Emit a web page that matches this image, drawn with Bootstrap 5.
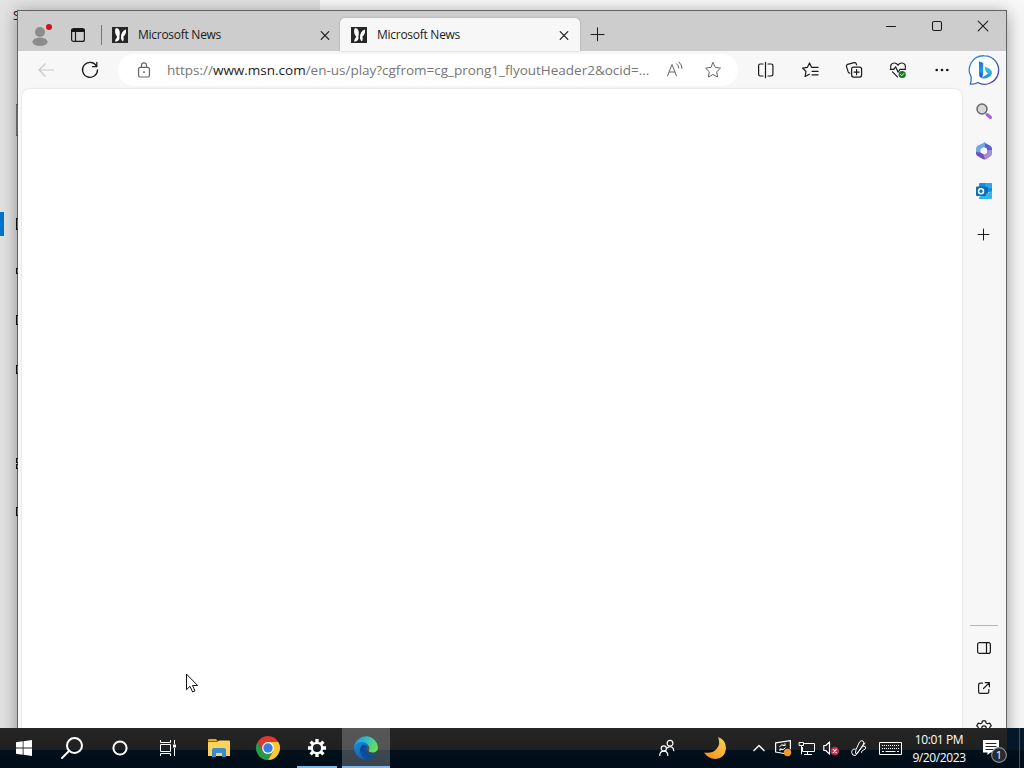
<!DOCTYPE html>
<html lang="en">
<head>
    <meta charset="UTF-8">
    <meta name="viewport" content="width=device-width, initial-scale=1.0">
    <title>Microsoft News</title>
    <!-- Bootstrap CSS -->
    <link href="https://cdn.jsdelivr.net/npm/bootstrap@5.3.0/dist/css/bootstrap.min.css" rel="stylesheet">
    <style>
        body {
            font-family: "Open Sans", "Noto Sans", sans-serif;
            font-size: 12px;
            color: #1b1b1b;
            /* Icon defaults, inherited by every svg */
            fill: none;
            stroke: currentColor;
            stroke-width: 1.2;
            stroke-linecap: round;
            stroke-linejoin: round;
        }
        svg {
            display: block;
            flex: none;
            overflow: visible;
        }
        button {
            color: inherit;
            background: none;
            border: 0;
            padding: 0;
            flex: none;
            display: flex;
            align-items: center;
            justify-content: center;
        }
        .desktop {
            width: 1024px;
            height: 768px;
            background: #f7f7f7;
        }
        /* Settings window behind the browser */
        .settings-pane {
            left: 0;
            top: 0;
            width: 320px;
            height: 728px;
            background: #e2e2e2;
        }
        .settings-letter {
            left: 13px;
            top: 8px;
            font-size: 12px;
            line-height: 16px;
        }
        .settings-active {
            left: 0;
            top: 212px;
            width: 4px;
            height: 24px;
            background: #0073cf;
        }
        .stem {
            left: 16px;
            width: 2px;
            border: 1px solid #111;
            border-right-width: 0;
        }
        /* Browser window */
        .browser {
            left: 17px;
            top: 10px;
            width: 990px;
            height: 741px;
            border: 1px solid #626262;
            background: #f7f7f7;
            box-shadow: 0 3px 16px rgba(0, 0, 0, 0.38);
        }
        .titlebar {
            height: 40px;
            background: #cdcdcd;
        }
        .profile-btn { width: 46px; height: 48px; }
        .actions-btn { width: 28px; height: 48px; }
        .tab-divider {
            width: 1px;
            height: 20px;
            margin: 14px 0 0 9px;
            background: #777;
        }
        .browser-tab {
            width: 240px;
            height: 33px;
            margin-top: 7px;
            padding: 0 8px 0 11px;
            border-radius: 5px 5px 0 0;
        }
        .browser-tab.inactive { width: 238px; padding-left: 10px; padding-right: 7px; }
        .browser-tab.current { background: #f7f7f7; box-shadow: 0 0 2px rgba(0, 0, 0, 0.25); }
        .tab-title {
            margin-left: 10px;
            font-size: 12px;
            line-height: 16px;
            letter-spacing: -0.27px;
        }
        .tab-close { width: 16px; height: 16px; }
        .newtab-btn { width: 34px; height: 46px; }
        .caption-btn { width: 46px; height: 30px; }
        .toolbar-row { height: 38px; padding-left: 6px; }
        .tool-btn { width: 44px; height: 38px; }
        .address {
            width: 620px;
            height: 32px;
            margin: 0 6px;
            padding: 0 9px 0 18px;
            border-radius: 16px;
            background: #fff;
            color: #666;
        }
        .url-text {
            width: 484px;
            margin-left: 15px;
            font-size: 13.5px;
            line-height: 20px;
            letter-spacing: -0.01px;
            color: #767676;
            white-space: nowrap;
        }
        .url-text b { font-weight: 400; color: #1b1b1b; }
        .address-btn { width: 32px; height: 32px; }
        .page-area {
            width: 940px;
            margin-left: 4px;
            background: #fff;
            border-radius: 7px 7px 0 0;
            box-shadow: 0 0 2px rgba(0, 0, 0, 0.18);
        }
        .side-strip { width: 44px; padding: 2px 0; }
        .side-btn { width: 44px; height: 40px; }
        .side-rule { width: 28px; height: 1px; margin-bottom: 2px; background: #b5b5b5; }
        /* Taskbar */
        .taskbar {
            left: 0;
            top: 728px;
            width: 1024px;
            height: 40px;
            background: linear-gradient(#252525 0, #202020 22px, #02101b 22px, #010d18 40px);
            color: #fff;
        }
        /* The dark wallpaper shows where the browser does not reach */
        .taskbar::before {
            content: "";
            position: absolute;
            left: 1007px;
            top: 0;
            width: 17px;
            height: 22px;
            background: #05182a;
        }
        .task-btn { width: 48px; height: 40px; flex: none; }
        .app-btn { width: 49px; height: 40px; flex: none; }
        .first-app { margin-left: 2px; }
        .running { position: relative; }
        .running::after {
            content: "";
            position: absolute;
            bottom: 0;
            left: 5px;
            right: 4px;
            height: 2px;
            background: #7fb9e8;
        }
        .focused {
            width: 48px;
            margin-left: 1px;
            background: rgba(255, 255, 255, 0.23);
        }
        .focused::after { left: 0; right: 0; }
        .tray-btn { width: 24px; height: 40px; }
        .pen-btn { width: 32px; }
        .keyboard-btn { width: 31px; }
        .notify-btn { width: 49px; }
        .clock {
            width: 62px;
            margin-left: 2px;
            font-size: 12px;
            line-height: 18px;
            letter-spacing: -0.4px;
            padding-top: 1px;
        }
        .show-desktop { width: 5px; border-left: 1px solid #46515a; z-index: 1; }
        .pointer { left: 185px; top: 673px; }
    </style>
</head>
<body class="m-0 overflow-hidden">
    <svg class="position-absolute" width="0" height="0">
        <defs>
            <linearGradient id="bubble" x1="0" y1="0" x2="1" y2="1"><stop offset="0" stop-color="#2b9bd8"/><stop offset=".5" stop-color="#326bbb"/><stop offset="1" stop-color="#4c3996"/></linearGradient>
            <linearGradient id="bing" x1="0" y1="0" x2="0" y2="1"><stop offset="0" stop-color="#1c70dc"/><stop offset=".55" stop-color="#1e9be8"/><stop offset="1" stop-color="#1a48c4"/></linearGradient>
            <linearGradient id="bingTail" x1="0" y1="0" x2="0" y2="1"><stop offset="0" stop-color="#42cfd8"/><stop offset="1" stop-color="#2388de"/></linearGradient>
            <linearGradient id="moon" x1="1" y1="0" x2="0" y2="1"><stop offset="0" stop-color="#f9d557"/><stop offset="1" stop-color="#f28a13"/></linearGradient>
            <linearGradient id="edgeTop" x1="0" y1="0" x2="1" y2="0.3"><stop offset="0" stop-color="#1d8ed8"/><stop offset=".5" stop-color="#2cbcd1"/><stop offset="1" stop-color="#65dc5c"/></linearGradient>
            <linearGradient id="edgeLow" x1="0" y1="0" x2="1" y2="1"><stop offset="0" stop-color="#198de0"/><stop offset="1" stop-color="#0b4d9e"/></linearGradient>
            <symbol id="news" viewBox="0 0 16 16">
                <path fill="#262626" stroke="none" d="M0 0h16v16H0z"/>
                <path fill="#fff" stroke="none" d="M3.500 1.500C6 .5 8 2.500 7.800 6.500L7.400 9.500C8 12.500 6.500 14.500 3 14.600c.4-2 1-3.400 2.300-4.600C3.200 7.500 2.500 4.500 3.500 1.500z"/>
                <path fill="#fff" stroke="none" d="M14 2.500c.4 3-.5 5.500-2.700 7.200.7 1.300.5 3-.3 4.700-1.500-1-2.300-2.400-2-4.600C9 6.500 10.800 3.500 14 2.500z"/>
            </symbol>
            <symbol id="cross" viewBox="0 0 16 16"><path d="M4.200 4.700l7.600 7.600M11.800 4.700l-7.600 7.600"/></symbol>
        </defs>
    </svg>

    <div class="desktop position-relative overflow-hidden">
        <div class="settings-pane position-absolute">
            <span class="settings-letter position-absolute">S</span>
            <div class="settings-active position-absolute"></div>
        </div>

        <!-- Browser window -->
        <main class="browser position-absolute d-flex flex-column">
            <div class="titlebar d-flex align-items-start flex-shrink-0">
                <button class="profile-btn" aria-label="Profile">
                    <svg width="24" height="24" viewBox="0 0 24 24" stroke="none">
                        <circle cx="11" cy="9" r="5" fill="#8c8c8c"/><ellipse cx="11" cy="18.800" rx="7.600" ry="4.300" fill="#8c8c8c"/>
                        <circle cx="20" cy="4" r="3" fill="#d0101c"/>
                    </svg>
                </button>
                <button class="actions-btn" aria-label="Tab actions">
                    <svg width="14" height="14" viewBox="0 0 14 14"><rect x=".6" y=".6" width="12.800" height="12.800" rx="2"/><path fill="#111" d="M1 1.500h12v2H1z"/><path d="M4.500 4v9"/></svg>
                </button>
                <div class="tab-divider"></div>
                <div class="browser-tab inactive d-flex align-items-center">
                    <svg width="16" height="16"><use href="#news"/></svg>
                    <span class="tab-title">Microsoft News</span>
                    <button class="tab-close ms-auto" aria-label="Close tab"><svg width="16" height="16"><use href="#cross"/></svg></button>
                </div>
                <div class="browser-tab current d-flex align-items-center">
                    <svg width="16" height="16"><use href="#news"/></svg>
                    <span class="tab-title">Microsoft News</span>
                    <button class="tab-close ms-auto" aria-label="Close tab"><svg width="16" height="16"><use href="#cross"/></svg></button>
                </div>
                <button class="newtab-btn" aria-label="New tab"><svg width="14" height="14" viewBox="0 0 14 14"><path stroke-width="1" d="M7.500 .8v13M1 7.500h13"/></svg></button>
                <div class="d-flex ms-auto">
                    <button class="caption-btn" aria-label="Minimize"><svg width="10" height="10" viewBox="0 0 10 10"><path stroke-width="1" d="M.5 5.500h9"/></svg></button>
                    <button class="caption-btn" aria-label="Maximize"><svg width="10" height="10" viewBox="0 0 10 10"><rect x=".5" y=".5" width="9" height="9" rx="1.500" stroke-width="1.100"/></svg></button>
                    <button class="caption-btn" aria-label="Close"><svg width="10" height="10" viewBox="0 0 10 10"><path stroke-width="1.100" d="M.2.2l9.600 9.600M9.800.2.2 9.800"/></svg></button>
                </div>
            </div>

            <!-- Toolbar -->
            <div class="toolbar-row d-flex align-items-center flex-shrink-0">
                <button class="tool-btn" aria-label="Back"><svg width="16" height="14" viewBox="0 0 16 14" stroke="#c8c8c8"><path d="M15.500 7H1M7 1 1 7l6 6"/></svg></button>
                <button class="tool-btn" aria-label="Refresh"><svg width="16" height="16" viewBox="0 0 16 16"><path stroke-width="1.300" d="M14.400 4A7.500 7.500 0 1 0 15.500 8M14.800.5v4.200h-4.300"/></svg></button>
                <div class="address d-flex align-items-center">
                    <svg width="16" height="16" viewBox="0 0 16 16"><rect x="2.600" y="5.400" width="10.800" height="9.600" rx="1.600"/><path d="M5.500 5V3.300a2.500 2.500 0 0 1 5 0V5"/><circle cx="8" cy="10.200" r=".9" fill="#666" stroke="none"/></svg>
                    <span class="url-text">https://<b>www.msn.com</b>/en-us/play?cgfrom=cg_prong1_flyoutHeader2&amp;ocid=...</span>
                    <button class="address-btn ms-2" aria-label="Read aloud"><svg width="16" height="16" viewBox="0 0 16 16" stroke-width="1"><path d="M.5 14 5 2.500 9.500 14M2.200 10h5.600M9.500 1.700q2.300 1.800 2.300 4.300M12 0q3 2.700 3 6.500"/></svg></button>
                    <button class="address-btn ms-auto" aria-label="Add to favorites"><svg width="16" height="16" viewBox="0 0 16 16" stroke-width="1"><path d="M8 .6l2.300 4.800 5.200.7-3.800 3.700.9 5.200L8 12.500 3.400 15l.9-5.200L.5 6.100l5.200-.7z"/></svg></button>
                </div>
                <button class="tool-btn" aria-label="Split screen"><svg width="16" height="16" viewBox="0 0 16 16"><path d="M7.500.3v15.400M5 2H2.300Q.6 2 .6 3.700v8.600Q.6 14 2.300 14H5M10 2h3.200q1.700 0 1.700 1.700v8.600q0 1.700-1.700 1.700H10"/></svg></button>
                <button class="tool-btn" aria-label="Favorites"><svg width="17" height="16" viewBox="0 0 17 16"><path d="M9.600 5.300 7.500 1 5.300 5.400.6 6.100 4 9.500l-.9 5 4.200-2.300M7.500 1l2.100 4.300h6.500M10 9.300h6.100M10 12.800h6.100"/></svg></button>
                <button class="tool-btn" aria-label="Collections"><svg width="16" height="16" viewBox="0 0 16 16"><rect x="5.600" y="5.100" width="10" height="10" rx="2"/><path d="M10.600 7.500v5.200M8 10.100h5.200M3.800 11.200Q2.600 11 2.200 9.900L.5 4.600Q0 3 1.600 2.400L8.200.6q1.500-.3 2 1l.4 1.300"/></svg></button>
                <button class="tool-btn" aria-label="Browser essentials"><svg width="16" height="16" viewBox="0 0 16 16"><path d="M.8 7C-.2 3.500 1.700 1 4.200 1 6 1 7.200 2 8 3.200 8.800 2 10 1 11.800 1c2.600 0 4.500 2.500 3.400 6M.2 7.300h3.500l1.900-2.500 2.500 5.400L10 7.300h5.500M2.500 9.800l5 5"/><circle cx="12.200" cy="12.500" r="3.600" fill="#147a20" stroke="none"/><path stroke="#fff" stroke-width="1" d="M10.700 12.600l1.100 1.100 2-2.100"/></svg></button>
                <button class="tool-btn" aria-label="Settings and more"><svg width="14" height="4" viewBox="0 0 14 4" stroke="none"><g fill="#111"><circle cx="1.700" cy="2" r="1.300"/><circle cx="7" cy="2" r="1.300"/><circle cx="12.300" cy="2" r="1.300"/></g></svg></button>
                <button class="tool-btn" style="width: 40px" aria-label="Bing">
                    <svg width="30" height="30" viewBox="0 0 30 30">
                        <path fill="#fff" stroke="url(#bubble)" stroke-width="1.300" d="M15.500 .8A14.200 14.200 0 1 1 8.700 27.500Q5.500 29.600 1.200 29q1.200-2.500 1-7A14.200 14.200 0 0 1 15.500 .8z"/>
                        <path fill="url(#bing)" stroke="none" d="M10 6.300l4.200 1.700V18l-1 5Q10 22.500 10 19z"/>
                        <path fill="url(#bingTail)" stroke="none" d="M15.500 11.500q6 1.700 7.400 5 .6 4-3.900 6-3.500 1.800-6.500.5L19 18.500l-2.200-2z"/>
                    </svg>
                </button>
            </div>

            <!-- Page and sidebar -->
            <div class="d-flex flex-grow-1">
                <div class="page-area"></div>
                <aside class="side-strip d-flex flex-column align-items-center">
                    <button class="side-btn" aria-label="Search"><svg width="16" height="16" viewBox="0 0 16 16"><path stroke="#a956e5" stroke-width="3" d="M11 11.500l3.500 3"/><circle cx="6" cy="6" r="5" fill="#d5d8d9" stroke="#686868" stroke-width="1.500"/></svg></button>
                    <button class="side-btn" aria-label="Microsoft 365"><svg width="16" height="18" viewBox="0 0 16 18" stroke="none"><path fill="#5360cf" d="M8 .3 14.500 4Q16 5 16 7v2.500L11 11V6.500L7.500 4.700z"/><path fill="#6fa8e8" d="M9 .3 2 3.500Q0 4.500 0 7v4l4.500 1V7l4.500-2.500z"/><path fill="#7350b8" d="M0 10v1.500Q0 13 1.500 14l5 3q2 1 4-.2L13 15l-5-2.500-3.500-2z"/><path fill="#a989dc" d="M16 8v4q0 1.500-1.300 2.300L9 17.600 7.500 13l3.500-2V8z"/></svg></button>
                    <button class="side-btn" aria-label="Outlook"><svg width="16" height="16" viewBox="0 0 16 16" stroke="none"><path fill="#1490df" d="M3 1q0-1 1-1h11q1 0 1 1v8H3z"/><path fill="#28a8ea" d="M9.500 0H15q1 0 1 1v4H9.500z"/><path fill="#1069ae" d="M3 4h9v7H3z"/><path fill="#35b4e8" d="M16 8v7q0 1-1 1H3v-2z"/><rect y="3.500" width="10" height="9.500" rx="1" fill="#086fba"/><circle cx="5" cy="8.200" r="2.500" stroke="#fff" stroke-width="1.500"/></svg></button>
                    <button class="side-btn mt-1" aria-label="Customize sidebar"><svg width="12" height="12" viewBox="0 0 12 12"><path stroke-width="1" d="M5.500 0v11M0 5.500h11"/></svg></button>
                    <div class="side-rule mt-auto"></div>
                    <button class="side-btn" aria-label="Hide sidebar"><svg width="14" height="12" viewBox="0 0 14 12"><rect x=".6" y=".6" width="12.800" height="10.800" rx="2"/><path d="M9.500 1v10"/></svg></button>
                    <button class="side-btn" aria-label="Open link"><svg width="12" height="12" viewBox="0 0 12 12"><path d="M4.500 1.200H2.300Q.6 1.200.6 2.900v6.800q0 1.700 1.700 1.700h6.800q1.700 0 1.700-1.700V7.500M7.200.6h4.200v4.200M11.200.8 5.500 6.500"/></svg></button>
                    <button class="side-btn" aria-label="Sidebar settings"><svg width="16" height="16" viewBox="0 0 16 16"><path d="M6.400.8h3.200l.5 2.100 1.500.9 2.100-.7 1.600 2.800-1.600 1.400v1.600l1.600 1.400-1.600 2.800-2.100-.7-1.500.9-.5 2.100H6.400l-.5-2.100-1.500-.9-2.100.7L.7 10.300l1.600-1.400V7.300L.7 5.900l1.600-2.800 2.100.7 1.500-.9z"/><circle cx="8" cy="8.100" r="2.300"/></svg></button>
                </aside>
            </div>
        </main>

        <!-- Slivers of the settings labels along the window edge -->
        <div class="stem position-absolute" style="top: 104px; height: 32px; opacity: .5"></div>
        <div class="stem position-absolute" style="top: 218px; height: 12px"></div>
        <div class="stem position-absolute" style="top: 268px; height: 6px"></div>
        <div class="stem position-absolute" style="top: 315px; height: 10px"></div>
        <div class="stem position-absolute" style="top: 365px; height: 9px"></div>
        <div class="stem position-absolute" style="top: 458px; height: 5px"></div>
        <div class="stem position-absolute" style="top: 464px; height: 5px"></div>
        <div class="stem position-absolute" style="top: 507px; height: 9px"></div>

        <svg class="pointer position-absolute" width="14" height="20" viewBox="0 0 14 20"><path fill="#fff" stroke="#111" stroke-width="1" stroke-linejoin="miter" d="M1.500 1.500v15.200l3.500-3.400 2.600 5.700 2.400-1.100-2.500-5.400h4.700z"/></svg>

        <!-- Taskbar -->
        <footer class="taskbar position-absolute d-flex">
            <button class="task-btn" aria-label="Start"><svg width="16" height="16" viewBox="0 0 16 16" stroke="none"><path fill="#fff" d="M0 2.200 6.700 1.300v6.200H0zM7.500 1.200 16 0v7.500H7.500zM0 8.400h6.700v6.300L0 13.800zM7.500 8.400H16V16l-8.500-1.200z"/></svg></button>
            <button class="task-btn" aria-label="Search"><svg width="22" height="22" viewBox="0 0 22 22" stroke-width="2"><circle cx="13.500" cy="8.500" r="7.500"/><path d="M8 14l-7 7"/></svg></button>
            <button class="task-btn" aria-label="Cortana"><svg width="16" height="16" viewBox="0 0 16 16"><circle cx="8" cy="8" r="6.600" stroke-width="2"/></svg></button>
            <button class="task-btn" aria-label="Task view"><svg width="16" height="16" viewBox="0 0 16 16" stroke-width="1" stroke-linecap="butt"><path d="M.5 0v2.500h10V0M.5 16v-2.500h10V16M.5 4.500h10v7H.5zM14.500 0v4M14.500 8v8"/><path fill="#fff" stroke="none" d="M13 4.500h3v3h-3z"/></svg></button>
            <button class="app-btn first-app" aria-label="File Explorer"><svg width="22" height="18" viewBox="0 0 22 18" stroke="none"><path fill="#e5a91d" d="M0 1q0-1 1-1h7l2 2.500H0z"/><path fill="#fbd25c" d="M0 3h9l2-1.500h10q1 0 1 1V17H0z"/><path fill="#398bcb" d="M4 18v-7q0-2 2-2h10q2 0 2 2v7h-4v-4H8v4z"/></svg></button>
            <button class="app-btn" aria-label="Chrome"><svg width="24" height="24" viewBox="0 0 24 24" stroke="none"><path fill="#dd3a2e" d="M1.600 6A12 12 0 0 1 22.400 6H12L6.800 15z"/><path fill="#2b9a48" d="M1.600 6A12 12 0 0 0 12 24l5.200-9H6.800z"/><path fill="#fcc934" d="M22.400 6A12 12 0 0 1 12 24l5.200-9L12 6z"/><circle cx="12" cy="12" r="5.900" fill="#fff"/><circle cx="12" cy="12" r="4.700" fill="#397ee0"/></svg></button>
            <button class="app-btn running" aria-label="Settings"><svg width="18" height="18" viewBox="0 0 18 18" stroke-linecap="butt"><circle cx="9" cy="9" r="5.200" stroke-width="2.300"/><g stroke-width="3.300"><path d="M9 0v3.500M9 14.500V18M0 9h3.500M14.500 9H18M2.600 2.600l2.500 2.500M12.900 12.900l2.500 2.500M15.400 2.600l-2.500 2.500M5.100 12.900l-2.500 2.500"/></g></svg></button>
            <button class="app-btn running focused" aria-label="Edge"><svg width="24" height="24" viewBox="0 0 24 24" stroke="none"><path fill="url(#edgeLow)" d="M0 12C0 7 4 5 8 5.500c4 .3 6 2.500 6 5.500-1.500 1-2 2-1.500 4 1 3.500 5.500 4.500 9.500 3A12 12 0 0 1 0 12z"/><path fill="#0e4c98" d="M9 8.500C5.500 11 5 16 7.500 19.500c1.800 2.600 4.500 4 7 4.200 3.200-.7 6-2.700 7.900-5.700-4 1.500-8.500.5-9.800-3-.7-2-.1-3.200 1.200-4.200z"/><path fill="url(#edgeTop)" d="M.1 11A12 12 0 0 1 24 11.500c0 3-2.300 5-5.200 5-2.800 0-4.500-.9-4.100-2 .8-1.200.9-2.300.5-3.500C14 7.500 11 6 8 6 4 6 1.500 8 .1 11z"/></svg></button>

            <div class="d-flex ms-auto align-items-center">
                <button class="task-btn" aria-label="People"><svg width="16" height="16" viewBox="0 0 16 16"><circle cx="11" cy="3.200" r="2.900"/><circle cx="4.800" cy="8.500" r="2.600"/><path d="M.8 15.500q0-4.300 4-4.300t4 4.300M8.500 7.800Q10.500 6 12.700 7q1.900 1 2.100 3.700"/></svg></button>
                <button class="task-btn" aria-label="Weather"><svg width="22" height="22" viewBox="0 0 22 22" stroke="none"><path fill="url(#moon)" d="M14 0Q22 2.500 22 11.500 21 21.500 11.500 22 4 22 0 15.500q8 1.500 12.500-3.500T14 0z"/></svg></button>
                <div class="d-flex ms-2">
                    <button class="tray-btn" aria-label="Show hidden icons"><svg width="12" height="8" viewBox="0 0 12 8" stroke-width="1.300" stroke-linecap="butt"><path d="M.5 7 6 1.500 11.500 7"/></svg></button>
                    <button class="tray-btn" aria-label="Update"><svg width="16" height="16" viewBox="0 0 16 16"><path d="M9 13.500.6 12V2.800L15.400.7v8"/><path stroke-width="1" d="M4.500 6.500q2-3 5.500-1V3.700M10 5.500H8M10.300 8q-2 3-5.300 1.200v1.500M5 9.200h2"/><circle cx="12.500" cy="12.500" r="3.700" fill="#f49b27" stroke="none"/></svg></button>
                    <button class="tray-btn" aria-label="Network"><svg width="16" height="14" viewBox="0 0 16 14" stroke-width="1"><path d="M5.500 2.500h10v8h-12v-4M8.500 10.500v3M5.500 13.500h7M.5 1.500h4v3h-4zM2.500 4.500V13"/></svg></button>
                    <button class="tray-btn" aria-label="Volume muted"><svg width="16" height="14" viewBox="0 0 16 14"><path d="M.8 4.500h2L6.500.8v12.400L2.800 9.500h-2z"/><circle cx="11.800" cy="10" r="4.300" fill="#c72941" stroke="none"/><path d="M10.200 8.400l3.200 3.200M13.400 8.400l-3.200 3.200"/></svg></button>
                </div>
                <button class="tray-btn pen-btn" aria-label="Pen workspace"><svg width="16" height="16" viewBox="0 0 16 16" stroke-width="1"><path d="M4 9Q.5 9 .7 12.500 1 16 4.500 15.500L12 5q1.500-2.500 0-4-2-1-3.500 1L5 9.500 4.500 13q0 1.500 2 .3L14 3M11 6.500q2-1 3.500.3 1 2.200-2 3.200-2.500 1-2 2.500"/></svg></button>
                <button class="tray-btn keyboard-btn" aria-label="Touch keyboard"><svg width="23" height="13" viewBox="0 0 23 13" stroke-width="1" stroke-linecap="butt"><rect x=".5" y=".5" width="22" height="12"/><path stroke-dasharray="1 1" d="M3 3.500h18M3 6.500h18"/><path d="M3 9.500h2M6.500 9.500h10M18 9.500h2"/></svg></button>
                <div class="clock text-center">10:01 PM<br>9/20/2023</div>
                <button class="tray-btn notify-btn" aria-label="Notifications">
                    <svg width="24" height="24" viewBox="0 0 24 24" stroke="none">
                        <path fill="#fff" d="M0 4h16v12.500H7.500L4.500 19v-2.500H0z"/><path stroke="#222" stroke-width="1" d="M3 7.500h10M3 10.500h10M3 13.500h7"/>
                        <circle cx="16" cy="19" r="7.400" fill="#262c32" stroke="#929292" stroke-width="1.100"/><text x="16" y="23" text-anchor="middle" fill="#fff" font-size="11">1</text>
                    </svg>
                </button>
                <div class="show-desktop align-self-stretch"></div>
            </div>
        </footer>
    </div>

    <!-- Bootstrap JS -->
    <script src="https://cdn.jsdelivr.net/npm/bootstrap@5.3.0/dist/js/bootstrap.bundle.min.js"></script>
</body>
</html>
